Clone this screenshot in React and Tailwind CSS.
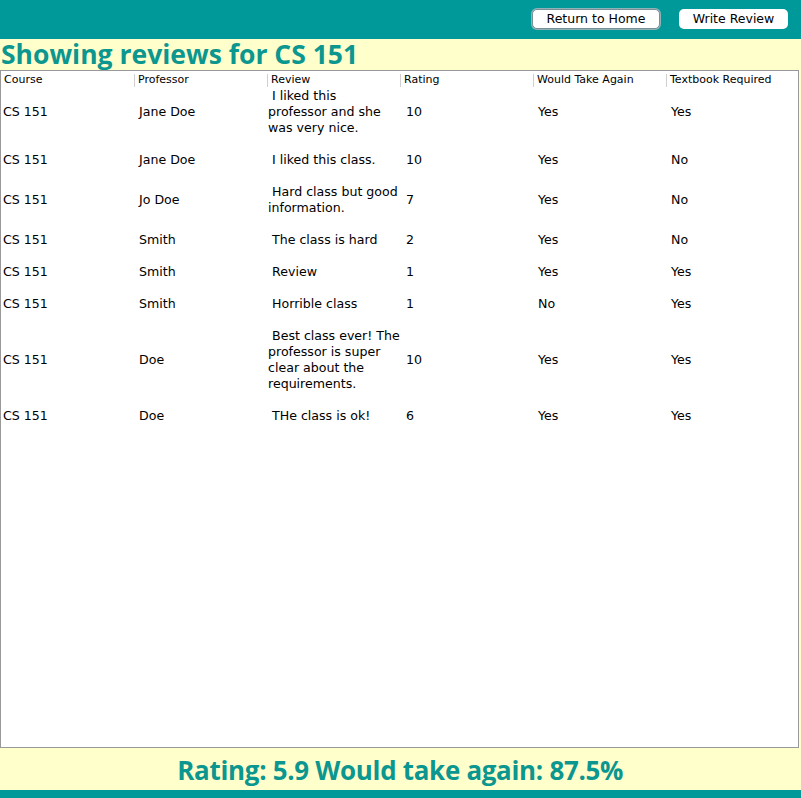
import React from "react";

const rows = [
  { c: "CS 151", p: "Jane Doe", r: [" I liked this", "professor and she", "was very nice."], rt: "10", w: "Yes", t: "Yes", h: "h-[48px]" },
  { c: "CS 151", p: "Jane Doe", r: [" I liked this class."], rt: "10", w: "Yes", t: "No", h: "h-[48px]" },
  { c: "CS 151", p: "Jo Doe", r: [" Hard class but good", "information."], rt: "7", w: "Yes", t: "No", h: "h-[32px]" },
  { c: "CS 151", p: "Smith", r: [" The class is hard"], rt: "2", w: "Yes", t: "No", h: "h-[48px]" },
  { c: "CS 151", p: "Smith", r: [" Review"], rt: "1", w: "Yes", t: "Yes", h: "h-[16px]" },
  { c: "CS 151", p: "Smith", r: [" Horrible class"], rt: "1", w: "No", t: "Yes", h: "h-[48px]" },
  { c: "CS 151", p: "Doe", r: [" Best class ever! The", "professor is super", "clear about the", "requirements."], rt: "10", w: "Yes", t: "Yes", h: "h-[64px]" },
  { c: "CS 151", p: "Doe", r: [" THe class is ok!"], rt: "6", w: "Yes", t: "Yes", h: "h-[48px]" },
];

const headers = ["Course", "Professor", "Review", "Rating", "Would Take Again", "Textbook Required"];

export default function App() {
  return (
    <div className="w-[801px] h-[798px] flex flex-col bg-[#ffffcc] overflow-hidden" style={{ fontFamily: '"DejaVu Sans", sans-serif' }}>
      <div className="h-[39px] bg-[#009999] flex items-start justify-end pt-[9px] pr-[13px] gap-[19px] shrink-0">
        <button className="h-[20px] w-[128px] bg-white rounded-[5px] border border-[#7a8f95] shadow-[0_0_0_1px_#8fb3b8] text-[12.5px] text-black leading-none">Return to Home</button>
        <button className="h-[20px] w-[109px] bg-white rounded-[5px] text-[12.5px] text-black leading-none">Write Review</button>
      </div>
      <div className="h-[31px] shrink-0 flex items-center pl-[1px]">
        <span className="text-[#0b968f] font-bold text-[26.5px] leading-none" style={{ fontFamily: '"Open Sans", sans-serif' }}>Showing reviews for CS 151</span>
      </div>
      <div className="h-[678px] w-[799px] shrink-0 bg-white border border-[#999999] flex flex-col">
        <div className="h-[17px] pt-[1px] grid grid-cols-[133px_133px_133px_133px_133px_133px] items-center text-[11px] text-black">
          {headers.map((h, i) => (
            <div key={h} className={"h-[13px] flex items-center pl-[3px] " + (i > 0 ? "border-l border-[#cfcfcf]" : "")}>{h}</div>
          ))}
        </div>
        <div className="flex flex-col text-[12.6px] text-black leading-[16px]">
          {rows.map((row, i) => (
            <div key={i} className={"grid grid-cols-[133px_133px_133px_133px_133px_133px] items-center " + row.h}>
              <div className="pl-[2px]">{row.c}</div>
              <div className="pl-[5px]">{row.p}</div>
              <div className="pl-[1px] whitespace-pre">{row.r.join("\n")}</div>
              <div className="pl-[6px]">{row.rt}</div>
              <div className="pl-[5px]">{row.w}</div>
              <div className="pl-[5px]">{row.t}</div>
            </div>
          ))}
        </div>
      </div>
      <div className="h-[42px] shrink-0 flex items-center justify-center">
        <span className="text-[#0b968f] font-bold text-[27px] leading-none scale-x-[0.96] whitespace-nowrap tracking-[-0.3px]" style={{ fontFamily: '"Open Sans", sans-serif' }}>Rating: 5.9 Would take again: 87.5%</span>
      </div>
      <div className="flex-1 bg-[#009999]" />
    </div>
  );
}
